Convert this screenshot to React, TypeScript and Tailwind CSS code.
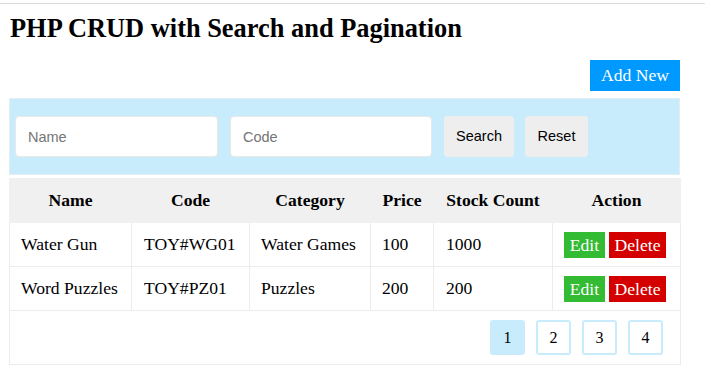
const rows = [
  { name: "Water Gun", code: "TOY#WG01", category: "Water Games", price: "100", stock: "1000" },
  { name: "Word Puzzles", code: "TOY#PZ01", category: "Puzzles", price: "200", stock: "200" },
];

const serif = "font-['Liberation_Serif','Times_New_Roman',serif]";
const sans = "font-['Liberation_Sans',Arial,sans-serif]";

export default function App() {
  return (
    <div className={`min-h-[382px] w-[705px] bg-white text-black ${serif}`}>
      <div className="h-[3px]" />
      <div className="h-px bg-[#dcdcdc]" />
      <div className="px-[9px]">
        <h1 className="mt-[9px] h-[30px] pl-px text-[26.4px] leading-[30px] font-bold">
          PHP CRUD with Search and Pagination
        </h1>

        <div className="mt-[17px] flex w-[671px] justify-end">
          <button className="h-[31px] w-[90px] bg-[#0099ff] text-[17.6px] leading-[31px] text-white">
            Add New
          </button>
        </div>

        <div className="mt-[7px] flex h-[77px] w-[671px] items-center gap-3 border border-[#e3eef2] bg-[#c8ecfb] pl-[5px]">
          <input
            placeholder="Name"
            className={`h-[41px] w-[203px] rounded border border-[#e8e8e8] bg-white px-3 text-[14.5px] outline-none placeholder:text-[#757575] ${sans}`}
          />
          <input
            placeholder="Code"
            className={`h-[41px] w-[202px] rounded border border-[#e8e8e8] bg-white px-3 text-[14.5px] outline-none placeholder:text-[#757575] ${sans}`}
          />
          <button className={`h-[41px] w-[70px] rounded bg-[#eeeeee] text-[14.5px] text-black ${sans}`}>
            Search
          </button>
          <button className={`-ml-px h-[41px] w-[63px] rounded bg-[#eeeeee] text-[14.5px] text-black ${sans}`}>
            Reset
          </button>
        </div>

        <table className="mt-[3px] w-[671px] table-fixed border-collapse text-[17.6px]">
          <colgroup>
            <col className="w-[122px]" />
            <col className="w-[118px]" />
            <col className="w-[121px]" />
            <col className="w-[63px]" />
            <col className="w-[119px]" />
            <col className="w-[128px]" />
          </colgroup>
          <thead>
            <tr className="h-[44px] bg-[#f0f0f0]">
              {["Name", "Code", "Category", "Price", "Stock Count", "Action"].map((h) => (
                <th key={h} className="border border-[#f0f0f0] p-0 text-center font-bold">
                  {h}
                </th>
              ))}
            </tr>
          </thead>
          <tbody>
            {rows.map((r) => (
              <tr key={r.code} className="h-[44px]">
                <td className="border border-[#ececec] pl-[11px] whitespace-nowrap">{r.name}</td>
                <td className="border border-[#ececec] pl-3 whitespace-nowrap">{r.code}</td>
                <td className="border border-[#ececec] pl-[11px] whitespace-nowrap">{r.category}</td>
                <td className="border border-[#ececec] pl-[11px]">{r.price}</td>
                <td className="border border-[#ececec] pl-3">{r.stock}</td>
                <td className="border border-[#ececec] pl-[11px]">
                  <div className="flex gap-1">
                    <button className="h-[26px] w-[41px] bg-[#33bb33] text-[17.6px] leading-[26px] text-white">
                      Edit
                    </button>
                    <button className="h-[26px] w-[57px] bg-[#d40000] text-[17.6px] leading-[26px] text-white">
                      Delete
                    </button>
                  </div>
                </td>
              </tr>
            ))}
            <tr className="h-[54px]">
              <td colSpan={6} className="border border-[#ececec] pr-[17px]">
                <div className="flex justify-end gap-[11px]">
                  {[1, 2, 3, 4].map((n) => (
                    <button
                      key={n}
                      className={`h-[35px] w-[35px] rounded-[3px] border-2 border-[#c8ecfb] text-[16px] ${
                        n === 1 ? "bg-[#c8ecfb]" : "bg-white"
                      }`}
                    >
                      {n}
                    </button>
                  ))}
                </div>
              </td>
            </tr>
          </tbody>
        </table>
      </div>
    </div>
  );
}
